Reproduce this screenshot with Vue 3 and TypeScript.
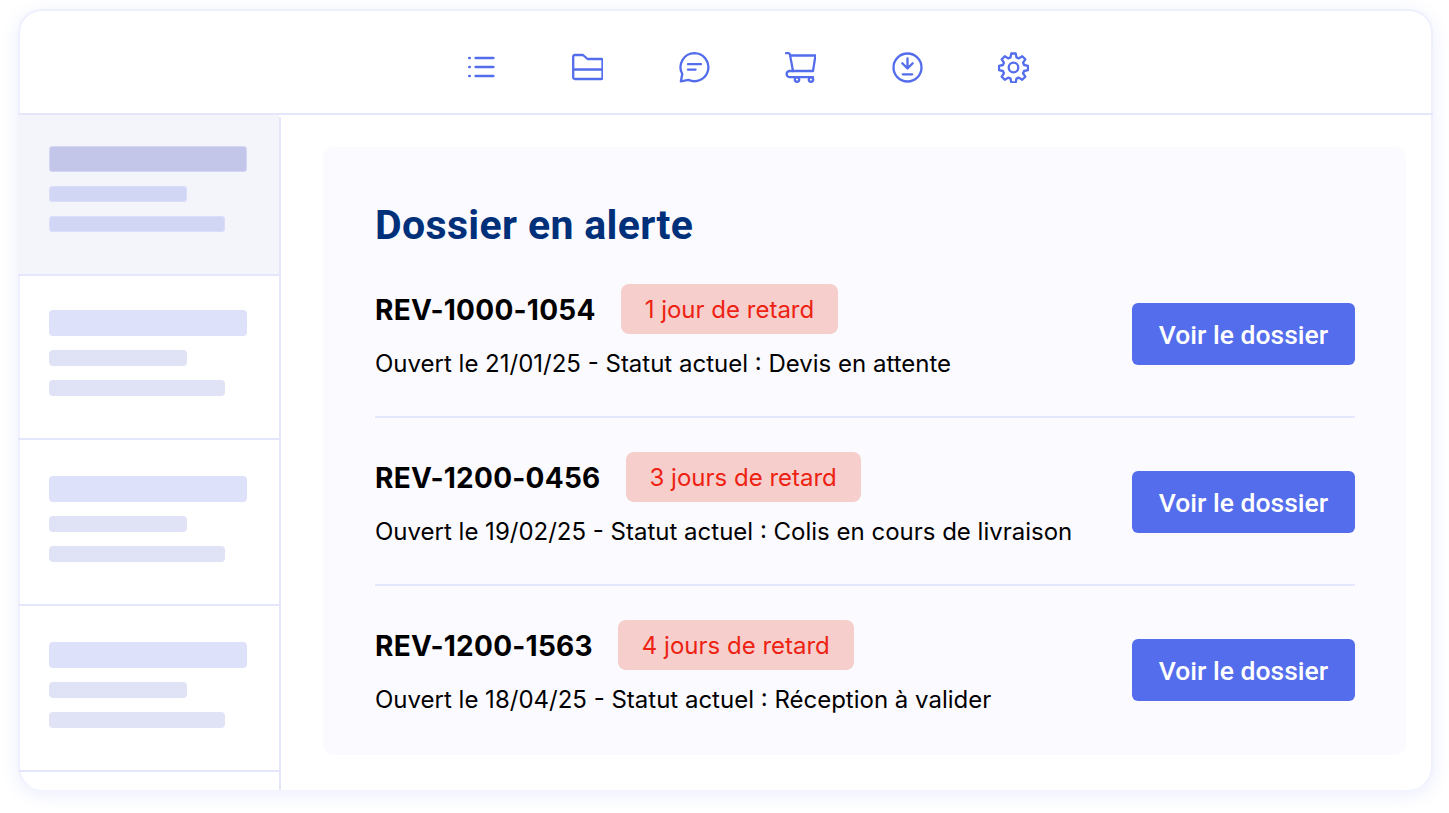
<script setup lang="ts">
interface Row { id: string; late: string; text: string }
const rows: Row[] = [
  { id: 'REV-1000-1054', late: '1 jour de retard', text: 'Ouvert le 21/01/25 - Statut actuel : Devis en attente' },
  { id: 'REV-1200-0456', late: '3 jours de retard', text: 'Ouvert le 19/02/25 - Statut actuel : Colis en cours de livraison' },
  { id: 'REV-1200-1563', late: '4 jours de retard', text: 'Ouvert le 18/04/25 - Statut actuel : Réception à valider' },
]
const side = ['active', 'second', 'alt', 'alt']
</script>

<template>
  <div class="page">
    <div class="card">
      <header class="top">
        <svg class="ic" viewBox="0 0 31 31"><path d="M9.500 6h18M9.500 15h18M9.500 24h18"/><path class="dot" d="M3.200 6h.6M3.200 15h.6M3.200 24h.6"/></svg>
        <svg class="ic" viewBox="0 0 31 31"><path d="M1.200 17.500V4.500a1.500 1.500 0 0 1 1.500-1.500H11l4.500 4h14.200a.8.800 0 0 1 .8.800V25.500a1.500 1.500 0 0 1-1.500 1.500H2.700a1.500 1.500 0 0 1-1.500-1.500v-8h29.300"/></svg>
        <svg class="ic" viewBox="0 0 31 31"><path d="M15.500 1.200a14 14 0 1 1-6 26.700L1.800 29.400 3.300 22A14 14 0 0 1 15.500 1.200Z"/><path d="M9 12.200h13M9 17.700h7.500"/></svg>
        <svg class="ic" viewBox="0 0 31 31"><path d="M1 1.200h2a2 2 0 0 1 2 1.700L8 19"/><path d="M5.500 3.500h25L28 19H8"/><path d="M8 19H4.700a3.100 3.100 0 0 0 0 6.200H28"/><circle cx="12" cy="27.600" r="2.200"/><circle cx="26" cy="27.600" r="2.200"/></svg>
        <svg class="ic" viewBox="0 0 31 31"><circle cx="15.500" cy="15.500" r="14"/><path d="M15.500 6.500v10M10.300 11.300l5.200 5.200 5.200-5.200M10.800 22.300h9.400"/></svg>
        <svg class="ic" viewBox="0 0 31 31"><circle cx="15.500" cy="15.500" r="4.800"/><path d="M13.300 1.500h4.400l.8 3.900 2.300 1 3.400-2.200 3.100 3.100-2.200 3.400 1 2.300 3.900.8v4.400l-3.900.8-1 2.300 2.200 3.400-3.100 3.100-3.400-2.200-2.300 1-.8 3.900h-4.400l-.8-3.900-2.300-1-3.400 2.200-3.100-3.100 2.200-3.400-1-2.300-3.900-.8v-4.400l3.900-.8 1-2.300-2.200-3.400 3.100-3.100 3.400 2.200 2.300-1Z"/></svg>
      </header>
      <div class="body">
        <aside class="side">
          <div v-for="(s, i) in side" :key="i" class="item" :class="s">
            <div class="bar b1"></div>
            <div class="bar b2"></div>
            <div class="bar b3"></div>
          </div>
        </aside>
        <main class="main">
          <section class="panel">
            <h1>Dossier en alerte</h1>
            <div v-for="(r, i) in rows" :key="r.id" class="row" :class="{ last: i === rows.length - 1 }">
              <div class="info">
                <div class="head">
                  <span class="id">{{ r.id }}</span>
                  <span class="late">{{ r.late }}</span>
                </div>
                <p class="text">{{ r.text }}</p>
              </div>
              <button class="btn">Voir le dossier</button>
            </div>
          </section>
        </main>
      </div>
    </div>
  </div>
</template>

<style>
html, body { margin: 0; background: #fff; }
</style>

<style scoped>
.page { width: 1449px; height: 813px; padding: 9px 0 0 18px; box-sizing: border-box; overflow: hidden; font-family: Inter, sans-serif; }
.card { width: 1415px; height: 781px; box-sizing: border-box; background: #fff; border: 2px solid #eff0fe; border-bottom: 0; border-radius: 24px; overflow: clip; overflow-clip-margin: border-box; box-shadow: 0 4px 18px rgba(83,108,236,.12); display: flex; flex-direction: column; }
.top { height: 104px; flex: none; box-sizing: border-box; border-bottom: 2px solid #e4e6fb; display: flex; align-items: center; gap: 75.500px; padding: 11px 0 0 447.500px; margin: 0 -2px; }
.ic { width: 31px; height: 31px; flex: none; fill: none; stroke: #536dec; stroke-width: 2.300; stroke-linecap: round; stroke-linejoin: round; }
.ic .dot { stroke-width: 2.400; }
.body { flex: 1; display: flex; min-height: 0; margin-left: -2px; }
.side { width: 263px; flex: none; box-sizing: border-box; border-right: 2px solid #e4e6fb; margin-top: 2px; }
.item { box-sizing: border-box; border-bottom: 2px solid #e4e6fb; height: 166px; padding: 36px 0 0 31px; }
.second { height: 164px; padding-top: 34px; }
.active { height: 161px; margin-top: -2px; background: #f4f5fb; padding-top: 31px; }
.bar { border-radius: 4px; }
.b1 { width: 198px; height: 26px; background: #dee1fa; }
.b2 { width: 138px; height: 16px; margin-top: 14px; background: #e0e3f6; }
.b3 { width: 176px; height: 16px; margin-top: 14px; background: #e0e3f6; }
.active .b1 { background: #c3c6e9; box-shadow: inset 0 0 0 1px #d5d8f4; }
.active .b2, .active .b3 { background: #d1d6f5; box-shadow: inset 0 0 0 1px #dadef8; }
.main { flex: 1; padding: 32px 27px 0 42px; }
.panel { width: 1083px; height: 608px; box-sizing: border-box; background: #fbfaff; border-radius: 10px; padding: 56px 51px 0 52px; }
h1 { margin: 0 0 3px; font-family: Roboto, sans-serif; font-weight: 700; font-size: 41px; line-height: 44px; color: #00307a; letter-spacing: .35px; }
.row { height: 168px; box-sizing: border-box; padding-top: 34px; border-bottom: 2px solid #e4e6fb; display: flex; justify-content: space-between; align-items: flex-start; }
.row.last { border-bottom: 0; }
.head { display: flex; align-items: center; gap: 25px; height: 50px; }
.id { font-size: 28px; font-weight: 700; line-height: 36px; padding-top: 2px; color: #000; letter-spacing: .25px; }
.late { height: 50px; box-sizing: border-box; padding: 0 24px; border-radius: 8px; background: #f6cfcd; color: #ed2212; font-size: 24px; line-height: 52px; }
.text { margin: 16px 0 0; font-size: 24px; line-height: 28px; color: #000; }
.btn { margin-top: 19px; width: 223px; height: 62px; border: 0; border-radius: 6px; background: #536dec; color: #fff; font-family: Roboto, sans-serif; font-weight: 500; font-size: 26.500px; padding: 0; }
</style>
